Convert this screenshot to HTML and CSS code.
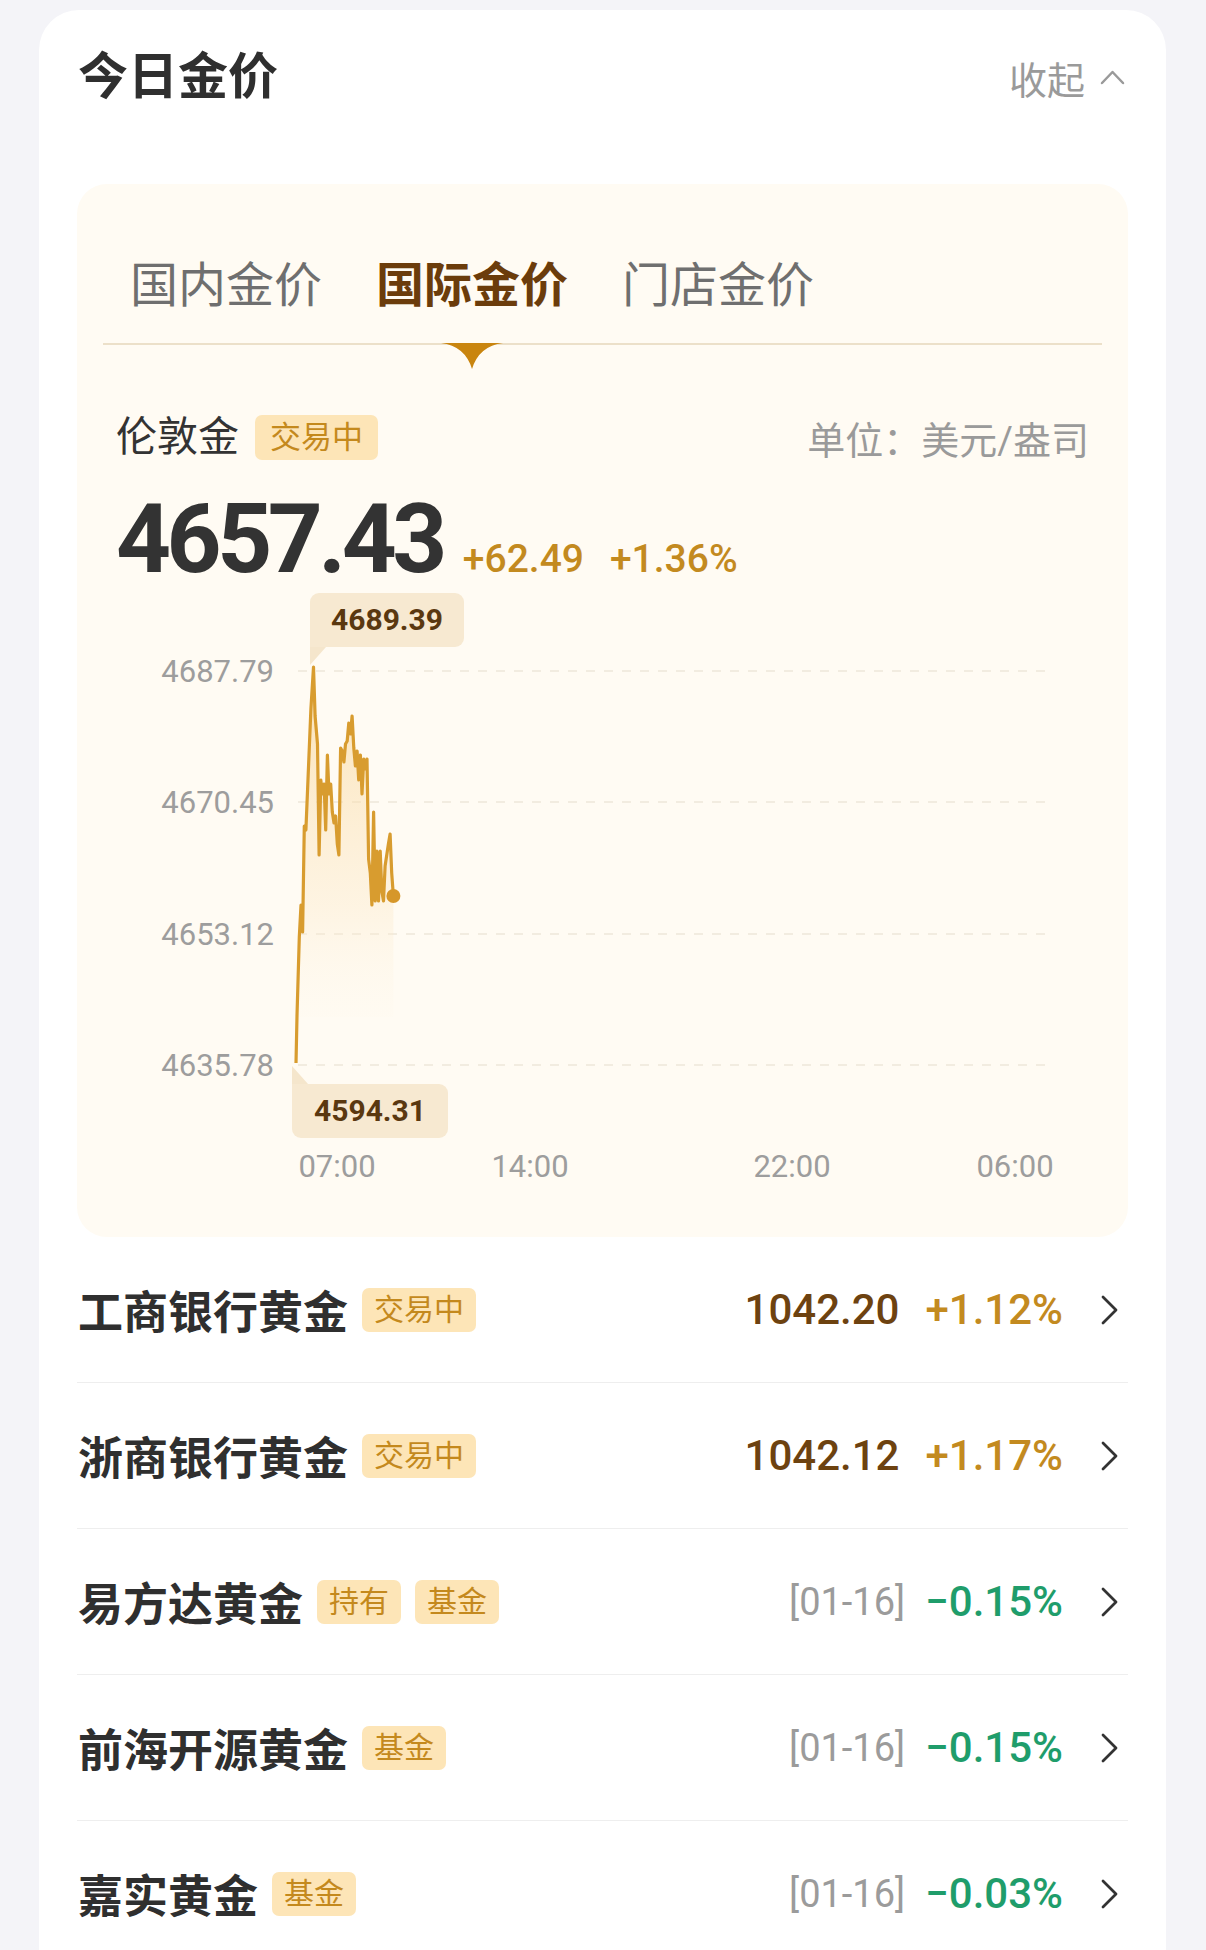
FILE: index.html
```html
<!doctype html>
<html lang="zh-CN">
<head>
  <meta charset="utf-8">
  <meta name="viewport" content="width=device-width, initial-scale=1">
  <title>今日金价</title>
  <link rel="stylesheet" href="styles.css">
</head>
<body>
  <div class="card">
    <div class="card-head">
      <h2>今日金价</h2>
      <div class="collapse">
        <span>收起</span>
        <svg width="25" height="16" viewBox="0 0 25 16"><path d="M2 14 L12.5 3 L23 14" fill="none" stroke="#9a9a9a" stroke-width="2.5" stroke-linecap="round" stroke-linejoin="round"/></svg>
      </div>
    </div>

    <div class="panel">
      <div class="tabs">
        <span class="tab">国内金价</span>
        <span class="tab active">国际金价</span>
        <span class="tab">门店金价</span>
      </div>

      <div class="quote">
        <div class="quote-head">
          <div class="quote-name">伦敦金 <span class="tag">交易中</span></div>
          <div class="unit">单位：美元/盎司</div>
        </div>
        <div class="quote-price">
          <span class="price">4657.43</span>
          <span class="change">+62.49</span>
          <span class="change">+1.36%</span>
        </div>
      </div>

      <!-- intraday chart, coordinates are in pixels of the chart box -->
      <div class="chart">
        <svg class="chart-svg" width="1051" height="620" viewBox="0 0 1051 620">
          <defs>
            <linearGradient id="areaFill" x1="0" y1="0" x2="0" y2="1">
              <stop offset="0" stop-color="#f8d08a" stop-opacity="0.6"/>
              <stop offset="0.6" stop-color="#fbe6c2" stop-opacity="0.35"/>
              <stop offset="1" stop-color="#fffbf3" stop-opacity="0"/>
            </linearGradient>
          </defs>
          <g class="grid">
            <line x1="221" y1="84" x2="974" y2="84"/>
            <line x1="221" y1="215" x2="974" y2="215"/>
            <line x1="221" y1="347" x2="974" y2="347"/>
            <line x1="221" y1="478" x2="974" y2="478"/>
          </g>
          <g class="y-labels">
            <text x="197" y="95">4687.79</text>
            <text x="197" y="226">4670.45</text>
            <text x="197" y="358">4653.12</text>
            <text x="197" y="489">4635.78</text>
          </g>
          <path class="area" d="M219 476 L220 429 L222.3 350 L224 318 L225.6 345 L227.3 239 L228.9 243 L233.9 122 L236.5 80 L238.1 129 L240.5 157 L242.1 268 L243.8 193 L245.4 207 L247.1 197 L248.7 243 L250.4 168 L252 207 L253.7 197 L255.3 225 L257 236 L258.6 229 L260.3 257 L261.9 268 L263.6 161 L265.2 164 L266.9 175 L268.5 157 L270.2 154 L271.8 136 L273.5 147 L275.1 129 L276.8 161 L278.4 179 L280.1 164 L281.7 193 L283.4 168 L285 207 L286.7 172 L288.3 182 L290 172 L291.6 272 L293.3 286 L294.9 318 L296.6 225 L298.2 314 L299.9 264 L301.5 314 L303.2 264 L304.8 304 L306.5 314 L308.1 279 L311.4 257 L313.1 247 L314.7 286 L316.4 309 L316.4 430 L219 430 Z"/>
          <path class="line" d="M219 476 L220 429 L222.3 350 L224 318 L225.6 345 L227.3 239 L228.9 243 L233.9 122 L236.5 80 L238.1 129 L240.5 157 L242.1 268 L243.8 193 L245.4 207 L247.1 197 L248.7 243 L250.4 168 L252 207 L253.7 197 L255.3 225 L257 236 L258.6 229 L260.3 257 L261.9 268 L263.6 161 L265.2 164 L266.9 175 L268.5 157 L270.2 154 L271.8 136 L273.5 147 L275.1 129 L276.8 161 L278.4 179 L280.1 164 L281.7 193 L283.4 168 L285 207 L286.7 172 L288.3 182 L290 172 L291.6 272 L293.3 286 L294.9 318 L296.6 225 L298.2 314 L299.9 264 L301.5 314 L303.2 264 L304.8 304 L306.5 314 L308.1 279 L311.4 257 L313.1 247 L314.7 286 L316.4 309"/>
          <circle class="dot" cx="316.4" cy="309" r="7"/>
          <g class="x-labels">
            <text x="260" y="590">07:00</text>
            <text x="453" y="590">14:00</text>
            <text x="715" y="590">22:00</text>
            <text x="938" y="590">06:00</text>
          </g>
        </svg>
        <div class="mark mark-max">4689.39</div>
        <div class="mark mark-min">4594.31</div>
      </div>
    </div>

    <ul class="list">
      <li class="row">
        <span class="row-name">工商银行黄金</span>
        <span class="tags"><span class="tag">交易中</span></span>
        <span class="row-right">
          <span class="value">1042.20</span>
          <span class="pct">+1.12%</span>
          <svg class="arrow" width="19" height="32" viewBox="0 0 19 32"><path d="M3 3 L16 16 L3 29" fill="none" stroke="#333" stroke-width="2.8" stroke-linecap="round" stroke-linejoin="round"/></svg>
        </span>
      </li>
      <li class="row">
        <span class="row-name">浙商银行黄金</span>
        <span class="tags"><span class="tag">交易中</span></span>
        <span class="row-right">
          <span class="value">1042.12</span>
          <span class="pct">+1.17%</span>
          <svg class="arrow" width="19" height="32" viewBox="0 0 19 32"><path d="M3 3 L16 16 L3 29" fill="none" stroke="#333" stroke-width="2.8" stroke-linecap="round" stroke-linejoin="round"/></svg>
        </span>
      </li>
      <li class="row">
        <span class="row-name">易方达黄金</span>
        <span class="tags"><span class="tag">持有</span><span class="tag">基金</span></span>
        <span class="row-right">
          <span class="date">[01-16]</span>
          <span class="pct down">−0.15%</span>
          <svg class="arrow" width="19" height="32" viewBox="0 0 19 32"><path d="M3 3 L16 16 L3 29" fill="none" stroke="#333" stroke-width="2.8" stroke-linecap="round" stroke-linejoin="round"/></svg>
        </span>
      </li>
      <li class="row">
        <span class="row-name">前海开源黄金</span>
        <span class="tags"><span class="tag">基金</span></span>
        <span class="row-right">
          <span class="date">[01-16]</span>
          <span class="pct down">−0.15%</span>
          <svg class="arrow" width="19" height="32" viewBox="0 0 19 32"><path d="M3 3 L16 16 L3 29" fill="none" stroke="#333" stroke-width="2.8" stroke-linecap="round" stroke-linejoin="round"/></svg>
        </span>
      </li>
      <li class="row">
        <span class="row-name">嘉实黄金</span>
        <span class="tags"><span class="tag">基金</span></span>
        <span class="row-right">
          <span class="date">[01-16]</span>
          <span class="pct down">−0.03%</span>
          <svg class="arrow" width="19" height="32" viewBox="0 0 19 32"><path d="M3 3 L16 16 L3 29" fill="none" stroke="#333" stroke-width="2.8" stroke-linecap="round" stroke-linejoin="round"/></svg>
        </span>
      </li>
    </ul>
  </div>
</body>
</html>
```

FILE: styles.css
```css
body {
  margin: 0;
  background-color: #f4f4f8;
  color: #333;
  font-family: Roboto, "Noto Sans CJK SC", sans-serif;
}

.card {
  margin: 10px 40px 0 39px;
  padding: 0 38px;
  background: #fff;
  border-radius: 40px 40px 0 0;
}

.card-head {
  height: 134px;
  display: flex;
  align-items: center;
  justify-content: space-between;
}

.card-head h2 {
  margin: 0;
  padding-left: 1px;
  font-size: 50px;
  line-height: 60px;
  font-weight: 700;
  color: #2f2f2f;
}

.collapse {
  display: flex;
  align-items: center;
  gap: 15px;
  margin-right: 3px;
  font-size: 38px;
  color: #9a9a9a;
}

/* cream panel with tabs, quote and chart */
.panel {
  margin-top: 40px;
  padding: 72px 26px 30px;
  background: #fffbf3;
  border-radius: 30px;
}

.tabs {
  display: flex;
  gap: 54px;
  padding: 0 27px 27px;
  border-bottom: 2px solid #ece0c9;
}

.tab {
  position: relative;
  font-size: 48px;
  line-height: 60px;
  color: #6f6f6f;
}

.tab.active {
  color: #6b3c0b;
  font-weight: 700;
}

.tab.active::after {
  content: '';
  position: absolute;
  left: 50%;
  top: 87px;
  width: 62px;
  height: 26px;
  margin-left: -31px;
  background: #c9850f;
  clip-path: path('M0 0 H62 Q38 3 31 26 Q24 3 0 0 Z');
}

.quote {
  padding: 0 13px;
}

.quote-head {
  height: 46px;
  margin-top: 69px;
  display: flex;
  align-items: center;
  justify-content: space-between;
}

.quote-name {
  display: flex;
  align-items: center;
  gap: 16px;
  font-size: 41px;
  line-height: 46px;
  color: #333;
}

.tag {
  padding: 0 12px;
  font-size: 30px;
  line-height: 44px;
  color: #c4891d;
  background: #fde5b7;
  border-radius: 7px;
}

.quote-name .tag {
  padding: 0 15px;
  font-size: 31px;
  line-height: 45px;
}

.unit {
  font-size: 38px;
  color: #9a9a9a;
}

.quote-price {
  height: 96px;
  margin-top: 31px;
  display: flex;
  align-items: baseline;
}

.price {
  margin-right: 20px;
  font-size: 96px;
  line-height: 96px;
  font-weight: 700;
  letter-spacing: -4.5px;
  color: #333;
}

.change {
  margin-right: 26px;
  font-size: 39px;
  font-weight: 500;
  color: #c38a1f;
}

.chart {
  position: relative;
  height: 620px;
  margin: 0 -26px;
}

.chart-svg {
  display: block;
}

.chart-svg text {
  font-family: Roboto, sans-serif;
  font-size: 31px;
  fill: #9d9d9d;
}

.y-labels text {
  text-anchor: end;
}

.x-labels text {
  text-anchor: middle;
}

.grid line {
  stroke: #eee7da;
  stroke-width: 1.5;
  stroke-dasharray: 9 9;
}

.area {
  fill: url(#areaFill);
}

.line {
  fill: none;
  stroke: #d89c2f;
  stroke-width: 3.2;
  stroke-linejoin: round;
}

.dot {
  fill: #d6972a;
}

.mark {
  position: absolute;
  width: 154px;
  height: 54px;
  line-height: 54px;
  text-align: center;
  font-size: 30px;
  font-weight: 700;
  color: #5a3810;
  background: #f7e9d1;
}

.mark-max {
  left: 233px;
  top: 6px;
  border-radius: 9px 9px 9px 0;
}

.mark-max::after {
  content: '';
  position: absolute;
  left: 0;
  top: 54px;
  width: 16px;
  height: 18px;
  background: #f5e6cc;
  clip-path: polygon(0 0, 100% 0, 0 100%);
}

.mark-min {
  left: 215px;
  top: 497px;
  width: 156px;
  border-radius: 0 9px 9px 9px;
}

.mark-min::before {
  content: '';
  position: absolute;
  left: 0;
  top: -18px;
  width: 16px;
  height: 18px;
  background: #f5e6cc;
  clip-path: polygon(0 0, 100% 100%, 0 100%);
}

/* product list */
.list {
  list-style: none;
  margin: 0;
  padding: 0;
}

.row {
  height: 145px;
  padding: 0 9px 0 1px;
  display: flex;
  align-items: center;
  border-bottom: 1px solid #eeeeee;
}

.row-name {
  margin-right: 14px;
  font-size: 45px;
  font-weight: 700;
  color: #2f2f2f;
}

.tags {
  display: flex;
  gap: 14px;
}

.row-right {
  margin-left: auto;
  display: flex;
  align-items: center;
}

.value {
  margin-right: 26px;
  font-size: 42px;
  font-weight: 500;
  color: #6d4210;
}

.date {
  margin-right: 20px;
  font-size: 38px;
  color: #9b9b9b;
}

.pct {
  margin-right: 37px;
  font-size: 42px;
  font-weight: 500;
  color: #c38a1f;
}

.pct.down {
  color: #1f9d6b;
}

.arrow {
  display: block;
}
```
